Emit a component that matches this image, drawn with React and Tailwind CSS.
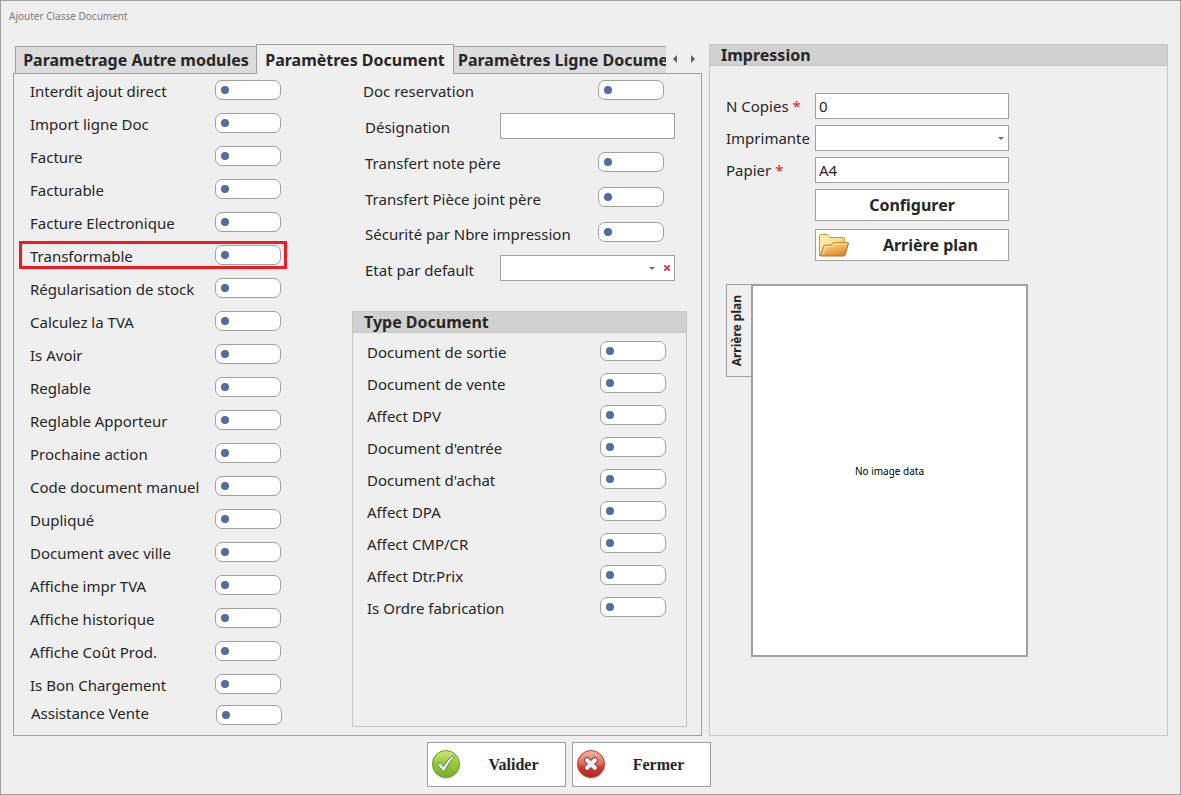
import { useState } from "react";

const documentOptions = [
  "Interdit ajout direct",
  "Import ligne Doc",
  "Facture",
  "Facturable",
  "Facture Electronique",
  "Transformable",
  "Régularisation de stock",
  "Calculez la TVA",
  "Is Avoir",
  "Reglable",
  "Reglable Apporteur",
  "Prochaine action",
  "Code document manuel",
  "Dupliqué",
  "Document avec ville",
  "Affiche impr TVA",
  "Affiche historique",
  "Affiche Coût Prod.",
  "Is Bon Chargement",
  "Assistance Vente",
];

const typeOptions = [
  "Document de sortie",
  "Document de vente",
  "Affect DPV",
  "Document d'entrée",
  "Document d'achat",
  "Affect DPA",
  "Affect CMP/CR",
  "Affect Dtr.Prix",
  "Is Ordre fabrication",
];

function Toggle({ id }) {
  return (
    <input
      id={id}
      type="checkbox"
      className="flex h-5 w-[66px] shrink-0 cursor-pointer appearance-none items-center rounded-[7px] border border-[#a0a0a0] bg-white px-[5px] before:size-2 before:rounded-full before:bg-[#4f6d9f] checked:justify-end"
    />
  );
}

function ToggleRow({ id, label, className, labelClass = "pt-0.5" }) {
  return (
    <div className={`flex items-center justify-between ${className}`}>
      <label htmlFor={id} className={`whitespace-nowrap ${labelClass}`}>
        {label}
      </label>
      <Toggle id={id} />
    </div>
  );
}

function Caret() {
  return (
    <svg viewBox="0 0 6 3" className="pointer-events-none h-[3px] w-1.5 shrink-0" aria-hidden="true">
      <path d="M0 0h6L3 3z" fill="#707070" />
    </svg>
  );
}

function FolderIcon() {
  return (
    <svg viewBox="0 0 32 25" className="h-[25px] w-8 shrink-0" aria-hidden="true">
      <defs>
        <linearGradient id="folderBack" x1="0" y1="0" x2="1" y2="1">
          <stop offset="0" stopColor="#fff6b4" />
          <stop offset="0.5" stopColor="#fbdc8a" />
          <stop offset="1" stopColor="#dd9a3c" />
        </linearGradient>
        <linearGradient id="folderFront" x1="0" y1="0" x2="0.6" y2="1">
          <stop offset="0" stopColor="#fde9ae" />
          <stop offset="0.45" stopColor="#f3bd62" />
          <stop offset="1" stopColor="#d9882c" />
        </linearGradient>
      </defs>
      <path d="M1.5 22.5V3Q1.500 1.500 3 1.500H9.500L12 4.500H25.500Q26.800 4.500 26.800 6V22.500Z" fill="url(#folderBack)" stroke="#cf9340" />
      <path d="M2.500 23L6.300 12.200H13L15.500 9.800H30.600L27.200 22Q26.800 23 26 23Z" fill="url(#folderFront)" stroke="#b9702a" />
      <path d="M4.500 21.500L7.200 13.300H13.500L16 10.900H29" fill="none" stroke="#fff0c4" strokeWidth="0.9" />
    </svg>
  );
}

function CheckIcon() {
  return (
    <svg viewBox="0 0 30 30" className="size-[30px] shrink-0" aria-hidden="true">
      <defs>
        <linearGradient id="okDisc" x1="0" y1="0" x2="0" y2="1">
          <stop offset="0" stopColor="#cfe87a" />
          <stop offset="0.45" stopColor="#9aca3c" />
          <stop offset="1" stopColor="#7aae28" />
        </linearGradient>
      </defs>
      <circle cx="15" cy="15" r="14.200" fill="#000" opacity="0.12" />
      <circle cx="15" cy="14" r="13.500" fill="url(#okDisc)" stroke="#6c9a2c" />
      <path d="M6.400 15L9.300 12.500L12.500 16.500Q16 9.500 21.800 5.700L23.500 7Q17.500 12.800 13.600 21.500H12Z" fill="#e6edf6" stroke="#5f8a3a" strokeWidth="1" strokeLinejoin="round" />
    </svg>
  );
}

function CrossIcon() {
  return (
    <svg viewBox="0 0 30 30" className="size-[30px] shrink-0" aria-hidden="true">
      <defs>
        <linearGradient id="closeDisc" x1="0" y1="0" x2="0" y2="1">
          <stop offset="0" stopColor="#f3b9ac" />
          <stop offset="0.5" stopColor="#de6a55" />
          <stop offset="0.6" stopColor="#cb4030" />
          <stop offset="1" stopColor="#b5231c" />
        </linearGradient>
      </defs>
      <circle cx="15" cy="15" r="14.200" fill="#000" opacity="0.12" />
      <circle cx="15" cy="14" r="13.500" fill="url(#closeDisc)" stroke="#b04338" />
      <path d="M11.200 10.200L18.800 17.800M18.800 10.200L11.200 17.800" stroke="#8f4440" strokeWidth="6.200" strokeLinecap="round" />
      <path d="M11.200 10.200L18.800 17.800M18.800 10.200L11.200 17.800" stroke="#e8eef8" strokeWidth="4.200" strokeLinecap="round" />
    </svg>
  );
}

const tabs = ["Parametrage Autre modules", "Paramètres Document", "Paramètres Ligne Document"];

function TabStrip() {
  return (
    <div className="relative z-10 -mb-px flex h-[30px] pl-0.5">
      <div role="tablist" className="flex min-w-0 flex-1 items-end overflow-hidden">
        {tabs.map((tab, i) => (
          <button
            key={tab}
            type="button"
            role="tab"
            aria-selected={i === 1}
            className={
              i === 1
                ? "-ml-px h-[30px] w-[198px] shrink-0 border border-b-0 border-[#a0a0a0] bg-[#efefef] font-bold whitespace-nowrap"
                : i === 0
                  ? "h-7 w-[242px] shrink-0 border border-[#a0a0a0] bg-[#dcdcdc] font-bold whitespace-nowrap"
                  : "-ml-px h-7 shrink-0 border border-[#a0a0a0] bg-[#dcdcdc] px-1 font-bold whitespace-nowrap"
            }
          >
            {tab}
          </button>
        ))}
      </div>
      <div className="flex w-9 items-center justify-between pr-[7px] pl-[7px]">
        <button type="button" aria-label="Onglets précédents">
          <svg viewBox="0 0 4 8" className="h-2 w-1" aria-hidden="true">
            <path d="M4 0v8L0 4z" fill="#606060" />
          </svg>
        </button>
        <button type="button" aria-label="Onglets suivants">
          <svg viewBox="0 0 4 8" className="h-2 w-1" aria-hidden="true">
            <path d="M0 0v8l4-4z" fill="#606060" />
          </svg>
        </button>
      </div>
    </div>
  );
}

function GroupBox({ title, className, children }) {
  return (
    <section className={`flex flex-col border border-[#c6c6c6] ${className}`}>
      <h2 className="h-[21px] border-b border-[#c6c6c6] bg-[#d1d1d1] px-[11px] text-[16px] leading-5 font-bold">
        {title}
      </h2>
      {children}
    </section>
  );
}

function DocumentPanel() {
  const [etat, setEtat] = useState("");
  return (
    <div role="tabpanel" className="flex flex-1 gap-[60px] border border-[#a0a0a0] text-[15px] leading-5">
      <div className="w-[278px] shrink-0">
        {documentOptions.map((label, i) => {
          const last = i === documentOptions.length - 1;
          return (
            <div key={label} className="relative">
              <ToggleRow
                id={`option-${i}`}
                label={label}
                className={last ? "h-7 pr-2.5 pl-[17px]" : "h-[33px] pr-[11px] pb-px pl-4"}
                labelClass={last ? "self-start pt-0.5" : "pt-0.5"}
              />
              {label === "Transformable" && (
                <div className="pointer-events-none absolute inset-x-[5px] top-0.5 h-7 border-3 border-[#ed1c24]" />
              )}
            </div>
          );
        })}
      </div>
      <div className="flex min-w-0 flex-1 flex-col pr-3.5 pb-2">
        <ToggleRow id="reservation" label="Doc reservation" className="h-[34px] pr-[23px] pb-0.5 pl-[11px]" />
        <div className="flex h-9 items-center justify-between pr-3 pl-[13px]">
          <label htmlFor="designation" className="pt-0.5">Désignation</label>
          <input id="designation" type="text" className="h-[26px] w-[175px] border border-[#a0a0a0] bg-white px-1" />
        </div>
        <ToggleRow id="note" label="Transfert note père" className="h-9 pr-[23px] pl-[13px]" />
        <ToggleRow
          id="piece"
          label="Transfert Pièce joint père"
          className="h-[35px] pr-[23px] pb-px pl-[13px]"
          labelClass="pt-1"
        />
        <ToggleRow
          id="securite"
          label="Sécurité par Nbre impression"
          className="h-[35px] pr-[23px] pb-px pl-[13px]"
          labelClass="pt-1"
        />
        <div className="flex h-9 items-center justify-between pr-3 pl-[13px]">
          <label htmlFor="etat" className="pt-1">Etat par default</label>
          <div className="flex h-[26px] w-[175px] items-center border border-[#a0a0a0] bg-white pr-[3px]">
            <select
              id="etat"
              value={etat}
              onChange={(e) => setEtat(e.target.value)}
              className="h-full min-w-0 flex-1 appearance-none px-1"
            >
              <option value=""></option>
            </select>
            <Caret />
            <button type="button" aria-label="Effacer" onClick={() => setEtat("")} className="ml-2">
              <svg viewBox="0 0 8 8" className="size-2" aria-hidden="true">
                <path d="M1.300 1.300l5.400 5.400M6.700 1.300L1.300 6.700" stroke="#d1304a" strokeWidth="1.800" />
              </svg>
            </button>
          </div>
        </div>
        <GroupBox title="Type Document" className="mt-[25px] flex-1">
          <div className="flex flex-col pt-0.5">
            {typeOptions.map((label, i) => (
              <ToggleRow key={label} id={`type-${i}`} label={label} className="h-8 pr-5 pl-3.5" />
            ))}
          </div>
        </GroupBox>
      </div>
    </div>
  );
}

function PrintPanel() {
  const field = "h-[26px] w-full border border-[#a0a0a0] bg-white px-[3px]";
  const action = "flex h-8 w-full items-center border border-[#a0a0a0] bg-white text-[16px] font-bold";
  return (
    <GroupBox title="Impression" className="min-w-0">
      <form
        className="flex flex-col px-4 pt-[27px] text-[15px] leading-5"
        onSubmit={(e) => e.preventDefault()}
      >
        <div className="grid grid-cols-[89px_194px] items-center gap-y-1.5">
          <label htmlFor="copies">
            N Copies <span className="text-[#f01020]">*</span>
          </label>
          <input id="copies" type="text" defaultValue="0" className={field} />
          <label htmlFor="imprimante">Imprimante</label>
          <div className="flex h-[26px] items-center border border-[#a0a0a0] bg-white pr-1">
            <select id="imprimante" className="h-full min-w-0 flex-1 appearance-none px-1">
              <option value=""></option>
            </select>
            <Caret />
          </div>
          <label htmlFor="papier">
            Papier <span className="text-[#f01020]">*</span>
          </label>
          <input id="papier" type="text" defaultValue="A4" className={field} />
          <div className="col-start-2 flex flex-col gap-2">
            <button type="button" className={`${action} justify-center`}>
              Configurer
            </button>
            <button type="button" className={`${action} pr-[30px] pl-0.5`}>
              <FolderIcon />
              <span className="flex-1 text-right">Arrière plan</span>
            </button>
          </div>
        </div>
        <div className="mt-[23px] flex items-start">
          <div className="relative z-10 -mr-px flex h-[93px] w-[26px] items-center justify-center border border-[#a0a0a0] bg-[#efefef] pr-1">
            <span className="rotate-180 text-[12px] leading-4 font-bold whitespace-nowrap [writing-mode:vertical-rl]">
              Arrière plan
            </span>
          </div>
          <div className="flex h-[373px] w-[277px] items-center justify-center border-2 border-[#a0a0a0] bg-white text-[10px] text-black">
            No image data
          </div>
        </div>
      </form>
    </GroupBox>
  );
}

function DialogButton({ icon, children }) {
  return (
    <button
      type="button"
      className="flex h-[45px] w-[139px] items-center border border-[#a0a0a0] bg-white pl-[3px] font-['Liberation_Serif',serif] text-[16px] font-bold"
    >
      {icon}
      <span className="flex-1 pl-0.5">{children}</span>
    </button>
  );
}

export default function App() {
  return (
    <div className="flex min-h-screen flex-col border border-[#a0a0a0] bg-[#efefef] px-3 pb-[7px] font-['Noto_Sans',sans-serif] text-[16px] leading-5 text-[#262626]">
      <header className="-ml-1 h-[43px] pt-[7px]">
        <h1 className="text-[10px] leading-4 text-[#7a7a7a]">Ajouter Classe Document</h1>
      </header>
      <main className="grid flex-1 grid-cols-[689fr_459fr] gap-[7px]">
        <div className="flex min-w-0 flex-col">
          <TabStrip />
          <DocumentPanel />
        </div>
        <PrintPanel />
      </main>
      <footer className="flex justify-center gap-1.5 pt-1.5 pr-11">
        <DialogButton icon={<CheckIcon />}>Valider</DialogButton>
        <DialogButton icon={<CrossIcon />}>Fermer</DialogButton>
      </footer>
    </div>
  );
}
